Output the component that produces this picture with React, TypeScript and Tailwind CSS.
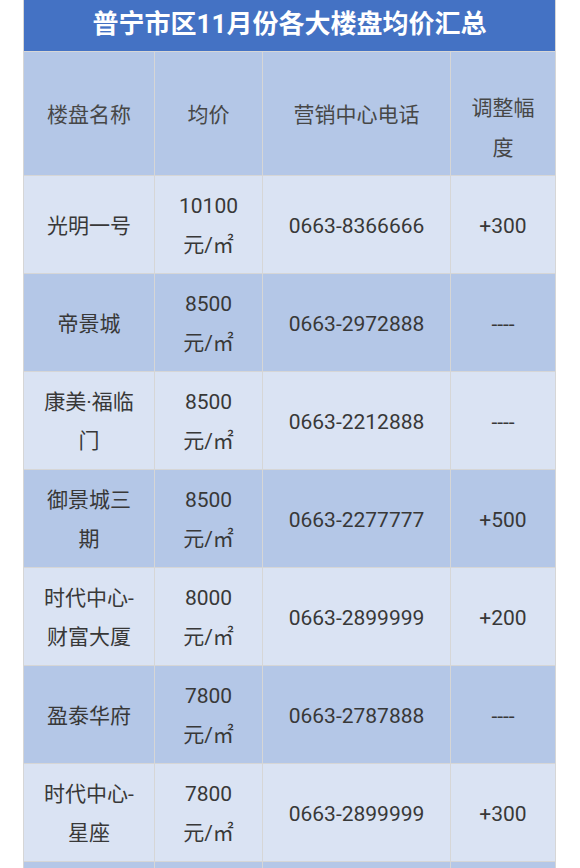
import React from "react";

type Row = { name: string[]; price: string; phone: string; change: string };

const rows: Row[] = [
  { name: ["光明一号"], price: "10100", phone: "0663-8366666", change: "+300" },
  { name: ["帝景城"], price: "8500", phone: "0663-2972888", change: "----" },
  { name: ["康美·福临", "门"], price: "8500", phone: "0663-2212888", change: "----" },
  { name: ["御景城三", "期"], price: "8500", phone: "0663-2277777", change: "+500" },
  { name: ["时代中心-", "财富大厦"], price: "8000", phone: "0663-2899999", change: "+200" },
  { name: ["盈泰华府"], price: "7800", phone: "0663-2787888", change: "----" },
  { name: ["时代中心-", "星座"], price: "7800", phone: "0663-2899999", change: "+300" },
  { name: ["流沙新城"], price: "7500", phone: "0663-2333333", change: "----" },
];

const font = { fontFamily: "Roboto, 'Noto Sans CJK SC', sans-serif" };

function Cell({ bg, children, tall, extra }: { bg: string; children: React.ReactNode; tall?: boolean; extra?: string }) {
  return (
    <div
      className={`${bg} ${tall ? "h-[123px] text-[#474747]" : "h-[97px] text-[#383838]"} ${extra ?? "pt-[3px] leading-[39px]"} flex flex-col items-center justify-center text-center text-[21px]`}
    >
      {children}
    </div>
  );
}

export default function App() {
  return (
    <div className="w-[580px] h-[868px] overflow-hidden bg-white" style={font}>
      <div className="ml-[23px] w-[533px] bg-[#d6d6d6] px-px pb-px grid grid-cols-[130px_107px_187px_104px] gap-px">
        <div className="col-span-4 h-[51px] bg-[#4472c4] flex items-center justify-center pb-[3px] text-white font-bold text-[26px]">
          普宁市区11月份各大楼盘均价汇总
        </div>
        <Cell bg="bg-[#b4c7e7]" tall>楼盘名称</Cell>
        <Cell bg="bg-[#b4c7e7]" tall>均价</Cell>
        <Cell bg="bg-[#b4c7e7]" tall>营销中心电话</Cell>
        <Cell bg="bg-[#b4c7e7]" tall extra="pt-[29px] leading-[40px]">
          <span>调整幅</span>
          <span>度</span>
        </Cell>
        {rows.map((r, i) => {
          const bg = i % 2 === 0 ? "bg-[#dae3f3]" : "bg-[#b4c7e7]";
          return (
            <React.Fragment key={i}>
              <Cell bg={bg}>
                {r.name.map((n, j) => (
                  <span key={j}>{n}</span>
                ))}
              </Cell>
              <Cell bg={bg}>
                <span>{r.price}</span>
                <span>元/㎡</span>
              </Cell>
              <Cell bg={bg}>{r.phone}</Cell>
              <Cell bg={bg}>{r.change}</Cell>
            </React.Fragment>
          );
        })}
      </div>
    </div>
  );
}
